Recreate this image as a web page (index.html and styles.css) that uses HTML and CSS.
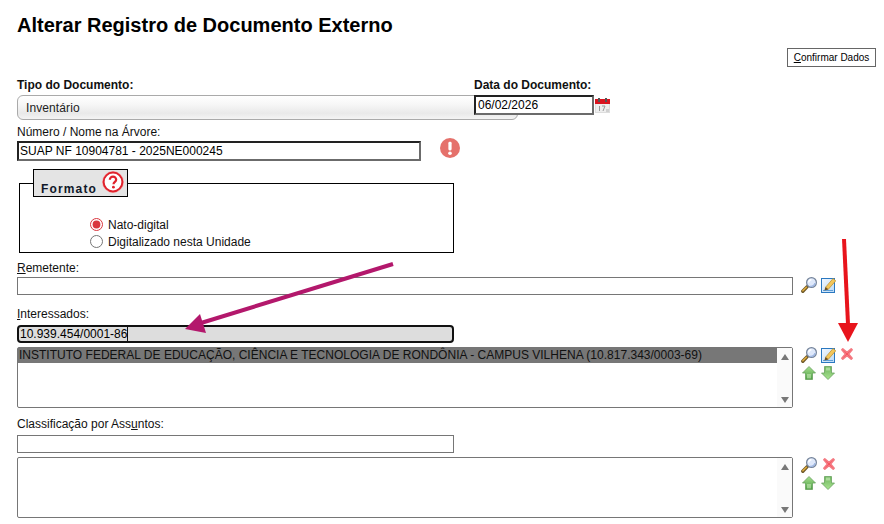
FILE: index.html
```html
<!DOCTYPE html>
<html lang="pt-BR">
<head>
<meta charset="utf-8">
<title>Alterar Registro de Documento Externo</title>
<link rel="stylesheet" href="styles.css">
</head>
<body>
<svg class="defs" width="0" height="0" aria-hidden="true">
  <defs>
    <linearGradient id="gUp" x1="0" y1="0" x2="0" y2="1"><stop offset="0" stop-color="#a5e08e"/><stop offset="1" stop-color="#4f9f45"/></linearGradient>
    <linearGradient id="gDown" x1="0" y1="0" x2="0" y2="1"><stop offset="0" stop-color="#6fb560"/><stop offset="1" stop-color="#a8e48f"/></linearGradient>
    <linearGradient id="gNote" x1="0" y1="0" x2="1" y2="1"><stop offset="0" stop-color="#f4f9ff"/><stop offset="1" stop-color="#b9d8f5"/></linearGradient>
    <symbol id="i-search" viewBox="0 0 16 16">
      <path d="M1.8 14.2 6 9.9" stroke="#6f5a2a" stroke-width="3.4" stroke-linecap="round"/>
      <path d="M1.8 13.8 5.4 10.2" stroke="#e3ae3c" stroke-width="1.4" stroke-linecap="round"/>
      <circle cx="10.5" cy="5.5" r="4.9" fill="#dfe9fb" stroke="#75849a" stroke-width="1.2"/>
      <path d="M7.8 5.6a2.8 2.8 0 0 1 2.6-2.8" fill="none" stroke="#fff" stroke-width="1.4"/>
      <path d="M9.2 9.2a4 4 0 0 0 4.8-3.2" fill="none" stroke="#9db6e4" stroke-width="1.3"/>
    </symbol>
    <symbol id="i-note" viewBox="0 0 15 16">
      <rect x=".5" y="1.5" width="13" height="14" fill="url(#gNote)" stroke="#2a78c0"/>
      <path d="M2 13.5h10" stroke="#5f9fd8"/>
      <path d="M4.6 10.2 12 1.6 14.8 3.8 7.2 12.4z" fill="#f3c65a" stroke="#b98d2b" stroke-width=".7"/>
      <path d="M3.4 13.6l1-3.6 3 2.4z" fill="#6b4d20"/>
    </symbol>
    <symbol id="i-del" viewBox="0 0 14 14">
      <path d="M1.8 2.8 2.8 1.8 7 5.4 11.2 1.8 12.2 2.8 8.6 7 12.2 11.2 11.2 12.2 7 8.6 2.8 12.2 1.8 11.2 5.4 7z" fill="#f8505c" stroke="#f47a82" stroke-width="1.5" stroke-linejoin="round"/>
    </symbol>
    <symbol id="i-up" viewBox="0 0 14 14">
      <path d="M7 .5 13.5 7H10.5v6.5h-7V7H.5z" fill="url(#gUp)" stroke="#6aa260" stroke-width=".8"/>
      <path d="M5 8v4.4h4V8" fill="#cdeebd" opacity=".55"/>
    </symbol>
    <symbol id="i-down" viewBox="0 0 14 14">
      <path d="M3.5.5h7V7h3L7 13.5.5 7h3z" fill="url(#gDown)" stroke="#6aa260" stroke-width=".8"/>
      <path d="M5 1.5h4v3H5z" fill="#cdeebd" opacity=".6"/>
    </symbol>
  </defs>
</svg>

<main class="page">
  <h1 class="title">Alterar Registro de Documento Externo</h1>
  <div class="actions">
    <button class="btn" type="button"><u>C</u>onfirmar Dados</button>
  </div>

  <div class="doc-grid">
    <label class="label strong">Tipo do Documento:</label>
    <label class="label strong date-label">Data do Documento:</label>
    <div class="select">Inventário</div>
    <div class="date-field">
      <input class="input inset date-input" value="06/02/2026">
      <svg class="cal" width="15" height="16" viewBox="0 0 15 16" aria-hidden="true">
        <rect x=".5" y="2.5" width="14" height="13" fill="#eee" stroke="#ddd"/>
        <rect x="0" y="2" width="15" height="5" fill="#d9141f"/>
        <rect x="3" y="1" width="2" height="4" fill="#555"/>
        <rect x="10" y="1" width="2" height="4" fill="#555"/>
        <rect x="4" y="9" width="1" height="5" fill="#999"/>
        <path d="M7 9h3l-2 5" fill="none" stroke="#999"/>
        <rect x="11" y="12" width="3" height="3" fill="#d0d0d0"/>
      </svg>
    </div>
  </div>

  <label class="label after-select">Número / Nome na Árvore:</label>
  <div class="name-row">
    <input class="input inset name-input" value="SUAP NF 10904781 - 2025NE000245">
    <svg class="alert" width="20" height="20" viewBox="0 0 21 21" aria-hidden="true">
      <circle cx="10.5" cy="10.5" r="10.5" fill="#e5716b"/>
      <rect x="8.8" y="4" width="3.4" height="9" rx="1.4" fill="#fff"/>
      <circle cx="10.5" cy="16" r="1.9" fill="#fff"/>
    </svg>
  </div>

  <fieldset class="format">
    <legend class="format-legend">
      <span class="format-title">Formato</span>
      <svg class="help" width="24" height="24" viewBox="0 0 24 24" aria-hidden="true">
        <circle cx="12" cy="12" r="10.5" fill="#fff" stroke="#f3b0b0" stroke-width="1"/>
        <circle cx="12" cy="12" r="9.4" fill="#fff" stroke="#e0222c" stroke-width="2"/>
        <path d="M8.8 9.8a3.2 3.2 0 0 1 6.4 0c0 2-2.7 2.2-2.7 4.4" fill="none" stroke="#e0222c" stroke-width="2.2"/>
        <circle cx="12.4" cy="17.2" r="1.4" fill="#e0222c"/>
      </svg>
    </legend>
    <label class="radio-row"><input class="radio" type="radio" name="formato" checked>Nato-digital</label>
    <label class="radio-row"><input class="radio" type="radio" name="formato">Digitalizado nesta Unidade</label>
  </fieldset>

  <label class="label sender-label"><u>R</u>emetente:</label>
  <div class="field-row">
    <input class="input plain wide">
    <div class="tools">
      <svg class="icon"><use href="#i-search"/></svg>
      <svg class="icon note"><use href="#i-note"/></svg>
    </div>
  </div>

  <label class="label int-label"><u>I</u>nteressados:</label>
  <div class="search-box"><span class="typed">10.939.454/0001-86</span></div>
  <div class="field-row list-row">
    <div class="listbox">
      <div class="options">
        <div class="option">INSTITUTO FEDERAL DE EDUCAÇÃO, CIÊNCIA E TECNOLOGIA DE RONDÔNIA - CAMPUS VILHENA (10.817.343/0003-69)</div>
      </div>
      <div class="scrollbar"><span class="tri-up"></span><span class="tri-down"></span></div>
    </div>
    <div class="tools stack">
      <div class="tool-line">
        <svg class="icon"><use href="#i-search"/></svg>
        <svg class="icon note"><use href="#i-note"/></svg>
        <svg class="small del-after-note"><use href="#i-del"/></svg>
      </div>
      <div class="tool-line arrows">
        <svg class="small"><use href="#i-up"/></svg>
        <svg class="small"><use href="#i-down"/></svg>
      </div>
    </div>
  </div>

  <label class="label class-label">Classificação por Ass<u>u</u>ntos:</label>
  <input class="input plain medium">
  <div class="field-row list-row">
    <div class="listbox">
      <div class="options"></div>
      <div class="scrollbar"><span class="tri-up"></span><span class="tri-down"></span></div>
    </div>
    <div class="tools stack">
      <div class="tool-line">
        <svg class="icon"><use href="#i-search"/></svg>
        <svg class="small del-after-search"><use href="#i-del"/></svg>
      </div>
      <div class="tool-line arrows">
        <svg class="small"><use href="#i-up"/></svg>
        <svg class="small"><use href="#i-down"/></svg>
      </div>
    </div>
  </div>

  <svg class="annot annot-purple" width="230" height="84" viewBox="0 0 230 84" aria-hidden="true">
    <path d="M209 10 17 69" stroke="#b3186c" stroke-width="4" fill="none"/>
    <path d="M1 75 16 60 22 79z" fill="#b3186c"/>
  </svg>
  <svg class="annot annot-red" width="24" height="124" viewBox="0 0 24 124" aria-hidden="true">
    <path d="M8 1 12 86" stroke="#e8141c" stroke-width="4" fill="none"/>
    <path d="M2 85H22L12 104z" fill="#e8141c"/>
  </svg>
</main>
</body>
</html>
```
FILE: styles.css
```css
* { box-sizing: border-box; }
html, body { margin: 0; padding: 0; background: #fff; }
body { font-family: "Liberation Sans", Arial, sans-serif; font-size: 12px; color: #000; overflow: hidden; }
.defs { position: absolute; }
.page { position: relative; width: 884px; height: 524px; padding: 0 8px 0 17px; }

.title { margin: 0; height: 48px; padding-top: 14px; font-size: 20px; line-height: 22px; font-weight: bold; }
.actions { display: flex; justify-content: flex-end; height: 19px; }
.btn { width: 89px; height: 19px; padding: 0; border: 1px solid #666; background: #fff; font: 10px/17px "Liberation Sans", Arial, sans-serif; color: #000; }

.label { display: block; height: 14px; line-height: 14px; font-size: 12px; color: #111; }
.strong { font-weight: bold; }

.doc-grid { display: grid; grid-template-columns: 457px 44px auto; grid-template-rows: 17px 25px; margin-top: 11px; }
.date-label { grid-column: 2 / 4; grid-row: 1; white-space: nowrap; }
.select { grid-column: 1 / 3; grid-row: 2; height: 25px; padding-left: 8px; line-height: 24px; border: 1px solid #aaa; border-radius: 6px; background: linear-gradient(#fff, #f7f7f7 35%, #e9e9e9 75%, #f4f4f4); color: #222; letter-spacing: .1px; }
.date-field { grid-column: 2 / 4; grid-row: 2; display: flex; align-items: flex-start; gap: 1px; z-index: 1; }

.input { display: block; font: 12px "Liberation Sans", Arial, sans-serif; color: #000; background: #fff; outline: none; margin: 0; padding: 0 2px; }
.inset { border: 2px solid; border-color: #222 #6b6b6b #6b6b6b #222; height: 20px; }
.date-input { width: 120px; }
.cal { margin-top: 2px; }

.after-select { margin-top: 5px; }
.name-row { display: flex; margin-top: 2px; height: 20px; }
.name-input { width: 404px; padding-left: 1px; }
.alert { margin: -3px 0 0 19px; }

.format { display: block; width: 435px; margin: 8px 0 0 2px; padding: 19px 0 2px; border: 1px solid #000; min-inline-size: 0; }
.format-legend { display: flex; align-items: center; width: 95px; height: 28px; margin-left: 13px; padding: 0 0 0 7px; border: 1px solid #000; background: #e4e4e4; }
.format-title { font-size: 12px; font-weight: bold; letter-spacing: 1.15px; color: #10182a; margin-top: 11px; }
.help { margin: -3px 0 0 4px; }
.radio-row { display: flex; align-items: center; gap: 5px; height: 17px; margin-left: 70px; color: #111; }
.radio { width: 13px; height: 13px; margin: 0; accent-color: #d9363e; }

.sender-label { margin-top: 8px; }
.field-row { display: flex; gap: 8px; margin-top: 2px; }
.plain { height: 18px; border: 1px solid #767676; }
.wide { width: 776px; }
.medium { width: 437px; margin-top: 4px; }
.tools { display: flex; gap: 4px; }
.stack { flex-direction: column; gap: 3px; }
.tool-line { display: flex; gap: 4px; }
.icon { display: block; width: 16px; height: 16px; }
.note { width: 15px; }
.small { display: block; width: 14px; height: 14px; }
.del-after-note { margin-left: 0; }
.del-after-search { margin-left: 1px; }
.arrows { gap: 5px; margin-left: 1px; }

.int-label { margin-top: 12px; }
.search-box { width: 437px; height: 18px; margin-top: 4px; padding-left: 1px; border: 2px solid #111; border-radius: 4px; background: #ddd; line-height: 14px; }
.typed { display: inline-block; height: 14px; border-right: 1px solid #111; }

.list-row { margin-top: 4px; }
.listbox { display: flex; width: 776px; height: 61px; border: 1px solid #767676; border-radius: 2px; background: #fff; }
.options { flex: 1; min-width: 0; }
.option { height: 15px; line-height: 14px; padding-left: 1px; background: #777; color: #111; white-space: nowrap; letter-spacing: .01px; }
.scrollbar { display: flex; flex-direction: column; justify-content: space-between; align-items: center; width: 15px; padding: 6px 0 4px; background: #fafafa; }
.tri-up, .tri-down { width: 0; height: 0; border-left: 4px solid transparent; border-right: 4px solid transparent; }
.tri-up { border-bottom: 6px solid #777; }
.tri-down { border-top: 6px solid #777; }

.class-label { margin-top: 9px; }

.annot { position: absolute; pointer-events: none; }
.annot-purple { left: 184px; top: 254px; }
.annot-red { left: 836px; top: 238px; }
```
